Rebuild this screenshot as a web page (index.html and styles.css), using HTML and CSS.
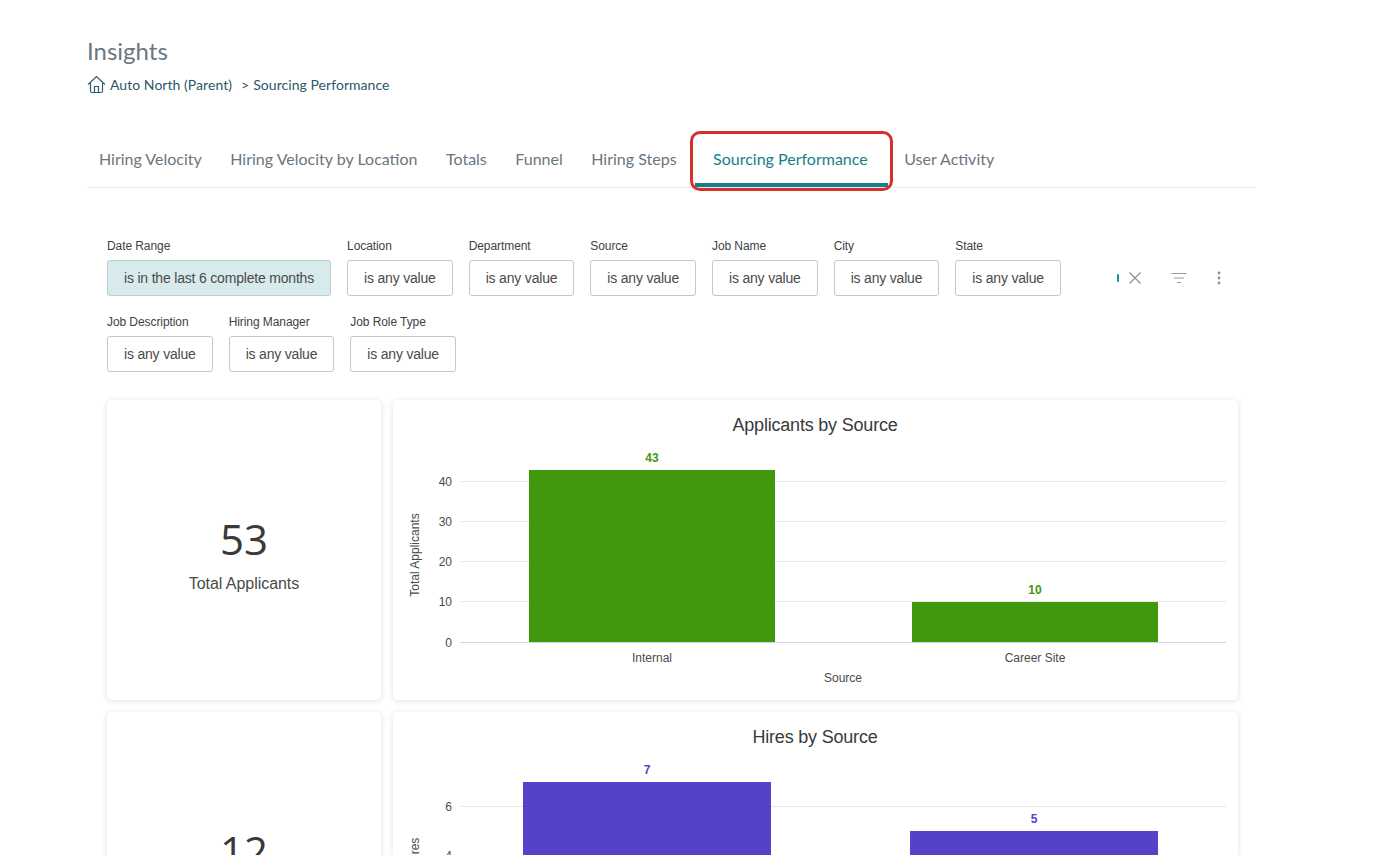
FILE: index.html
```html
<!DOCTYPE html>
<html>
	<head>
		<meta charset="utf-8" />
		<title>Insights</title>
		<link rel="stylesheet" href="styles.css">
	</head>
	<body>
		<div class="page">
			<h1 class="page-title">Insights</h1>
			<div class="breadcrumb">
				<svg class="home-icon" width="19" height="19" viewBox="0 0 19 19" fill="none" stroke="#2f5d73" stroke-width="1.2">
					<path d="M1 9.5 L9.5 1.5 L18 9.5" />
					<path d="M3.5 8 V16 Q3.5 17.5 5 17.5 H14 Q15.5 17.5 15.5 16 V8" />
					<path d="M7.5 17.5 V11.5 H11.5 V17.5" />
				</svg>
				<span class="crumb-link">Auto North (Parent)</span>
				<span class="crumb-sep">&gt;</span>
				<span>Sourcing Performance</span>
			</div>

			<div class="tabs">
				<div class="tab">Hiring Velocity</div>
				<div class="tab">Hiring Velocity by Location</div>
				<div class="tab">Totals</div>
				<div class="tab">Funnel</div>
				<div class="tab">Hiring Steps</div>
				<div class="tab active">Sourcing Performance<span class="highlight"></span></div>
				<div class="tab">User Activity</div>
			</div>

			<div class="dashboard">
				<div class="filter-bar">
					<div class="filters">
						<div class="filter">
							<label>Date Range</label>
							<div class="filter-box selected">is in the last 6 complete months</div>
						</div>
						<div class="filter">
							<label>Location</label>
							<div class="filter-box">is any value</div>
						</div>
						<div class="filter">
							<label>Department</label>
							<div class="filter-box">is any value</div>
						</div>
						<div class="filter">
							<label>Source</label>
							<div class="filter-box">is any value</div>
						</div>
						<div class="filter">
							<label>Job Name</label>
							<div class="filter-box">is any value</div>
						</div>
						<div class="filter">
							<label>City</label>
							<div class="filter-box">is any value</div>
						</div>
						<div class="filter">
							<label>State</label>
							<div class="filter-box">is any value</div>
						</div>
						<div class="filter">
							<label>Job Description</label>
							<div class="filter-box">is any value</div>
						</div>
						<div class="filter">
							<label>Hiring Manager</label>
							<div class="filter-box">is any value</div>
						</div>
						<div class="filter">
							<label>Job Role Type</label>
							<div class="filter-box">is any value</div>
						</div>
					</div>
					<div class="filter-actions">
						<span class="spinner-bit"></span>
						<svg width="14" height="14" viewBox="0 0 14 14" stroke="#8f8f8f" stroke-width="1.2" fill="none">
							<path d="M1.5 1.5 L12.5 12.5 M12.5 1.5 L1.5 12.5" />
						</svg>
						<svg class="filter-icon" width="16" height="12" viewBox="0 0 16 12" stroke="#9a9a9a" stroke-width="1.2" fill="none">
							<path d="M0.5 1.5 H15.5 M3 6 H13 M6 10.5 H10" />
						</svg>
						<svg class="dots-icon" width="4" height="14" viewBox="0 0 4 14" fill="#8f8f8f">
							<circle cx="2" cy="2" r="1.4" />
							<circle cx="2" cy="7" r="1.4" />
							<circle cx="2" cy="12" r="1.4" />
						</svg>
					</div>
				</div>

				<div class="row">
					<div class="card stat">
						<div class="stat-number">53</div>
						<div class="stat-label">Total Applicants</div>
					</div>
					<div class="card chart">
						<svg width="845" height="300" viewBox="0 0 845 300">
							<text class="chart-title" x="422" y="31" text-anchor="middle">Applicants by Source</text>
							<line class="grid" x1="67" x2="833" y1="81.5" y2="81.5" />
							<line class="grid" x1="67" x2="833" y1="121.5" y2="121.5" />
							<line class="grid" x1="67" x2="833" y1="161.5" y2="161.5" />
							<line class="grid" x1="67" x2="833" y1="201.5" y2="201.5" />
							<line class="axis" x1="67" x2="833" y1="242.5" y2="242.5" />
							<text class="tick" x="59" y="86" text-anchor="end">40</text>
							<text class="tick" x="59" y="126" text-anchor="end">30</text>
							<text class="tick" x="59" y="166" text-anchor="end">20</text>
							<text class="tick" x="59" y="206" text-anchor="end">10</text>
							<text class="tick" x="59" y="247" text-anchor="end">0</text>
							<rect class="bar-green" x="136" y="70" width="246" height="172" />
							<rect class="bar-green" x="519" y="202" width="246" height="40" />
							<text class="value value-green" x="259" y="62" text-anchor="middle">43</text>
							<text class="value value-green" x="642" y="194" text-anchor="middle">10</text>
							<text class="tick" x="259" y="262" text-anchor="middle">Internal</text>
							<text class="tick" x="642" y="262" text-anchor="middle">Career Site</text>
							<text class="tick" x="450" y="282" text-anchor="middle">Source</text>
							<text class="tick" transform="translate(26 155) rotate(-90)" text-anchor="middle">Total Applicants</text>
						</svg>
					</div>
				</div>

				<div class="row">
					<div class="card stat">
						<div class="stat-number">12</div>
						<div class="stat-label">Total Hires</div>
					</div>
					<div class="card chart">
						<svg width="845" height="300" viewBox="0 0 845 300">
							<text class="chart-title" x="422" y="31" text-anchor="middle">Hires by Source</text>
							<line class="grid" x1="67" x2="833" y1="94.5" y2="94.5" />
							<line class="grid" x1="67" x2="833" y1="143.5" y2="143.5" />
							<text class="tick" x="59" y="99" text-anchor="end">6</text>
							<text class="tick" x="59" y="148" text-anchor="end">4</text>
							<rect class="bar-purple" x="130" y="70" width="248" height="172" />
							<rect class="bar-purple" x="517" y="119" width="248" height="123" />
							<text class="value value-purple" x="254" y="62" text-anchor="middle">7</text>
							<text class="value value-purple" x="641" y="111" text-anchor="middle">5</text>
							<text class="tick" transform="translate(26 154) rotate(-90)" text-anchor="middle">Total Hires</text>
						</svg>
					</div>
				</div>
			</div>
		</div>
	</body>
</html>
```

FILE: styles.css
```css
html, body {
  margin: 0;
  height: 855px;
  overflow: hidden;
  background: #ffffff;
}

.page {
  width: 1169px;
  margin-left: 87px;
  padding-top: 37px;
  font-family: "Lato", sans-serif;
}

.page-title {
  margin: 0;
  font-size: 24px;
  line-height: 28px;
  font-weight: 400;
  color: #6b7680;
}

.breadcrumb {
  display: flex;
  align-items: center;
  height: 20px;
  margin-top: 9px;
  font-size: 14px;
  letter-spacing: 0.05px;
  color: #2f5668;
}
.home-icon {
  margin-right: 4px;
}
.crumb-sep {
  margin: 0 4px 0 9px;
}

/* tabs */
.tabs {
  display: flex;
  gap: 4.5px;
  height: 51px;
  margin-top: 42px;
  border-bottom: 1px solid #e8eaec;
}
.tab {
  position: relative;
  padding: 13px 12px 0 12px;
  font-size: 16px;
  line-height: 20px;
  color: #6b7680;
}
.tab.active {
  margin: 0 0 0 2px;
  padding: 13px 20px 0 18px;
  color: #14808c;
  border-bottom: 4px solid #14808c;
  height: 34px;
}
.highlight {
  position: absolute;
  left: -5px;
  right: -5px;
  top: -5px;
  bottom: -8px;
  border: 3px solid #d92e2e;
  border-radius: 10px;
}

/* filters */
.dashboard {
  padding: 50px 18px 0 20px;
}
.filter-bar {
  display: flex;
}
.filters {
  display: flex;
  flex-wrap: wrap;
  gap: 18px 16px;
  width: 975px;
  font-family: "Liberation Sans", sans-serif;
}
.filter label {
  display: block;
  height: 16px;
  margin-bottom: 6px;
  font-size: 12px;
  line-height: 16px;
  letter-spacing: -0.08px;
  color: #3f3f3f;
}
.filter-box {
  box-sizing: border-box;
  height: 36px;
  padding: 0 16px;
  border: 1px solid #c4c7ca;
  border-radius: 3px;
  font-size: 14px;
  line-height: 35px;
  letter-spacing: -0.19px;
  color: #4a4a4a;
  white-space: nowrap;
}
.filter-box.selected {
  background: #d7ebec;
  border-color: #b9cfd1;
}

.filter-actions {
  display: flex;
  align-items: center;
  height: 36px;
  margin-top: 22px;
  margin-left: 35px;
}
.spinner-bit {
  width: 2px;
  height: 8px;
  margin-right: 9px;
  background: #1b93a3;
  border-radius: 1px;
}
.filter-icon {
  margin-left: 29px;
}
.dots-icon {
  margin-left: 30px;
}

/* cards */
.row {
  display: flex;
  gap: 12px;
  margin-bottom: 12px;
}
.filter-bar + .row {
  margin-top: 28px;
}
.card {
  height: 300px;
  background: #ffffff;
  border-radius: 5px;
  box-shadow: 0 1px 6px rgba(0, 0, 0, 0.12);
}
.stat {
  display: flex;
  flex-direction: column;
  align-items: center;
  justify-content: center;
  width: 274px;
  padding-top: 4px;
  box-sizing: border-box;
  color: #3a3a3a;
}
.stat-number {
  font-family: "Open Sans", sans-serif;
  font-size: 42px;
  line-height: 56px;
}
.stat-label {
  margin-top: 7px;
  font-family: "Liberation Sans", sans-serif;
  font-size: 16px;
  line-height: 20px;
  letter-spacing: -0.05px;
  color: #4a4a4a;
}
.chart {
  width: 845px;
}
.chart svg {
  display: block;
}

.chart-title {
  font-family: "Liberation Sans", sans-serif;
  font-size: 18px;
  letter-spacing: -0.2px;
  fill: #3a3a3a;
}
.tick {
  font-family: "Liberation Sans", sans-serif;
  font-size: 12px;
  fill: #4a4a4a;
}
.value {
  font-family: "Liberation Sans", sans-serif;
  font-size: 12px;
  font-weight: 700;
}
.value-green {
  fill: #41980d;
}
.value-purple {
  fill: #5442c9;
}
.grid {
  stroke: #e6e6e6;
  stroke-width: 1;
}
.axis {
  stroke: #ccd6eb;
  stroke-width: 1;
}
.bar-green {
  fill: #41980d;
}
.bar-purple {
  fill: #5442c9;
}
```
